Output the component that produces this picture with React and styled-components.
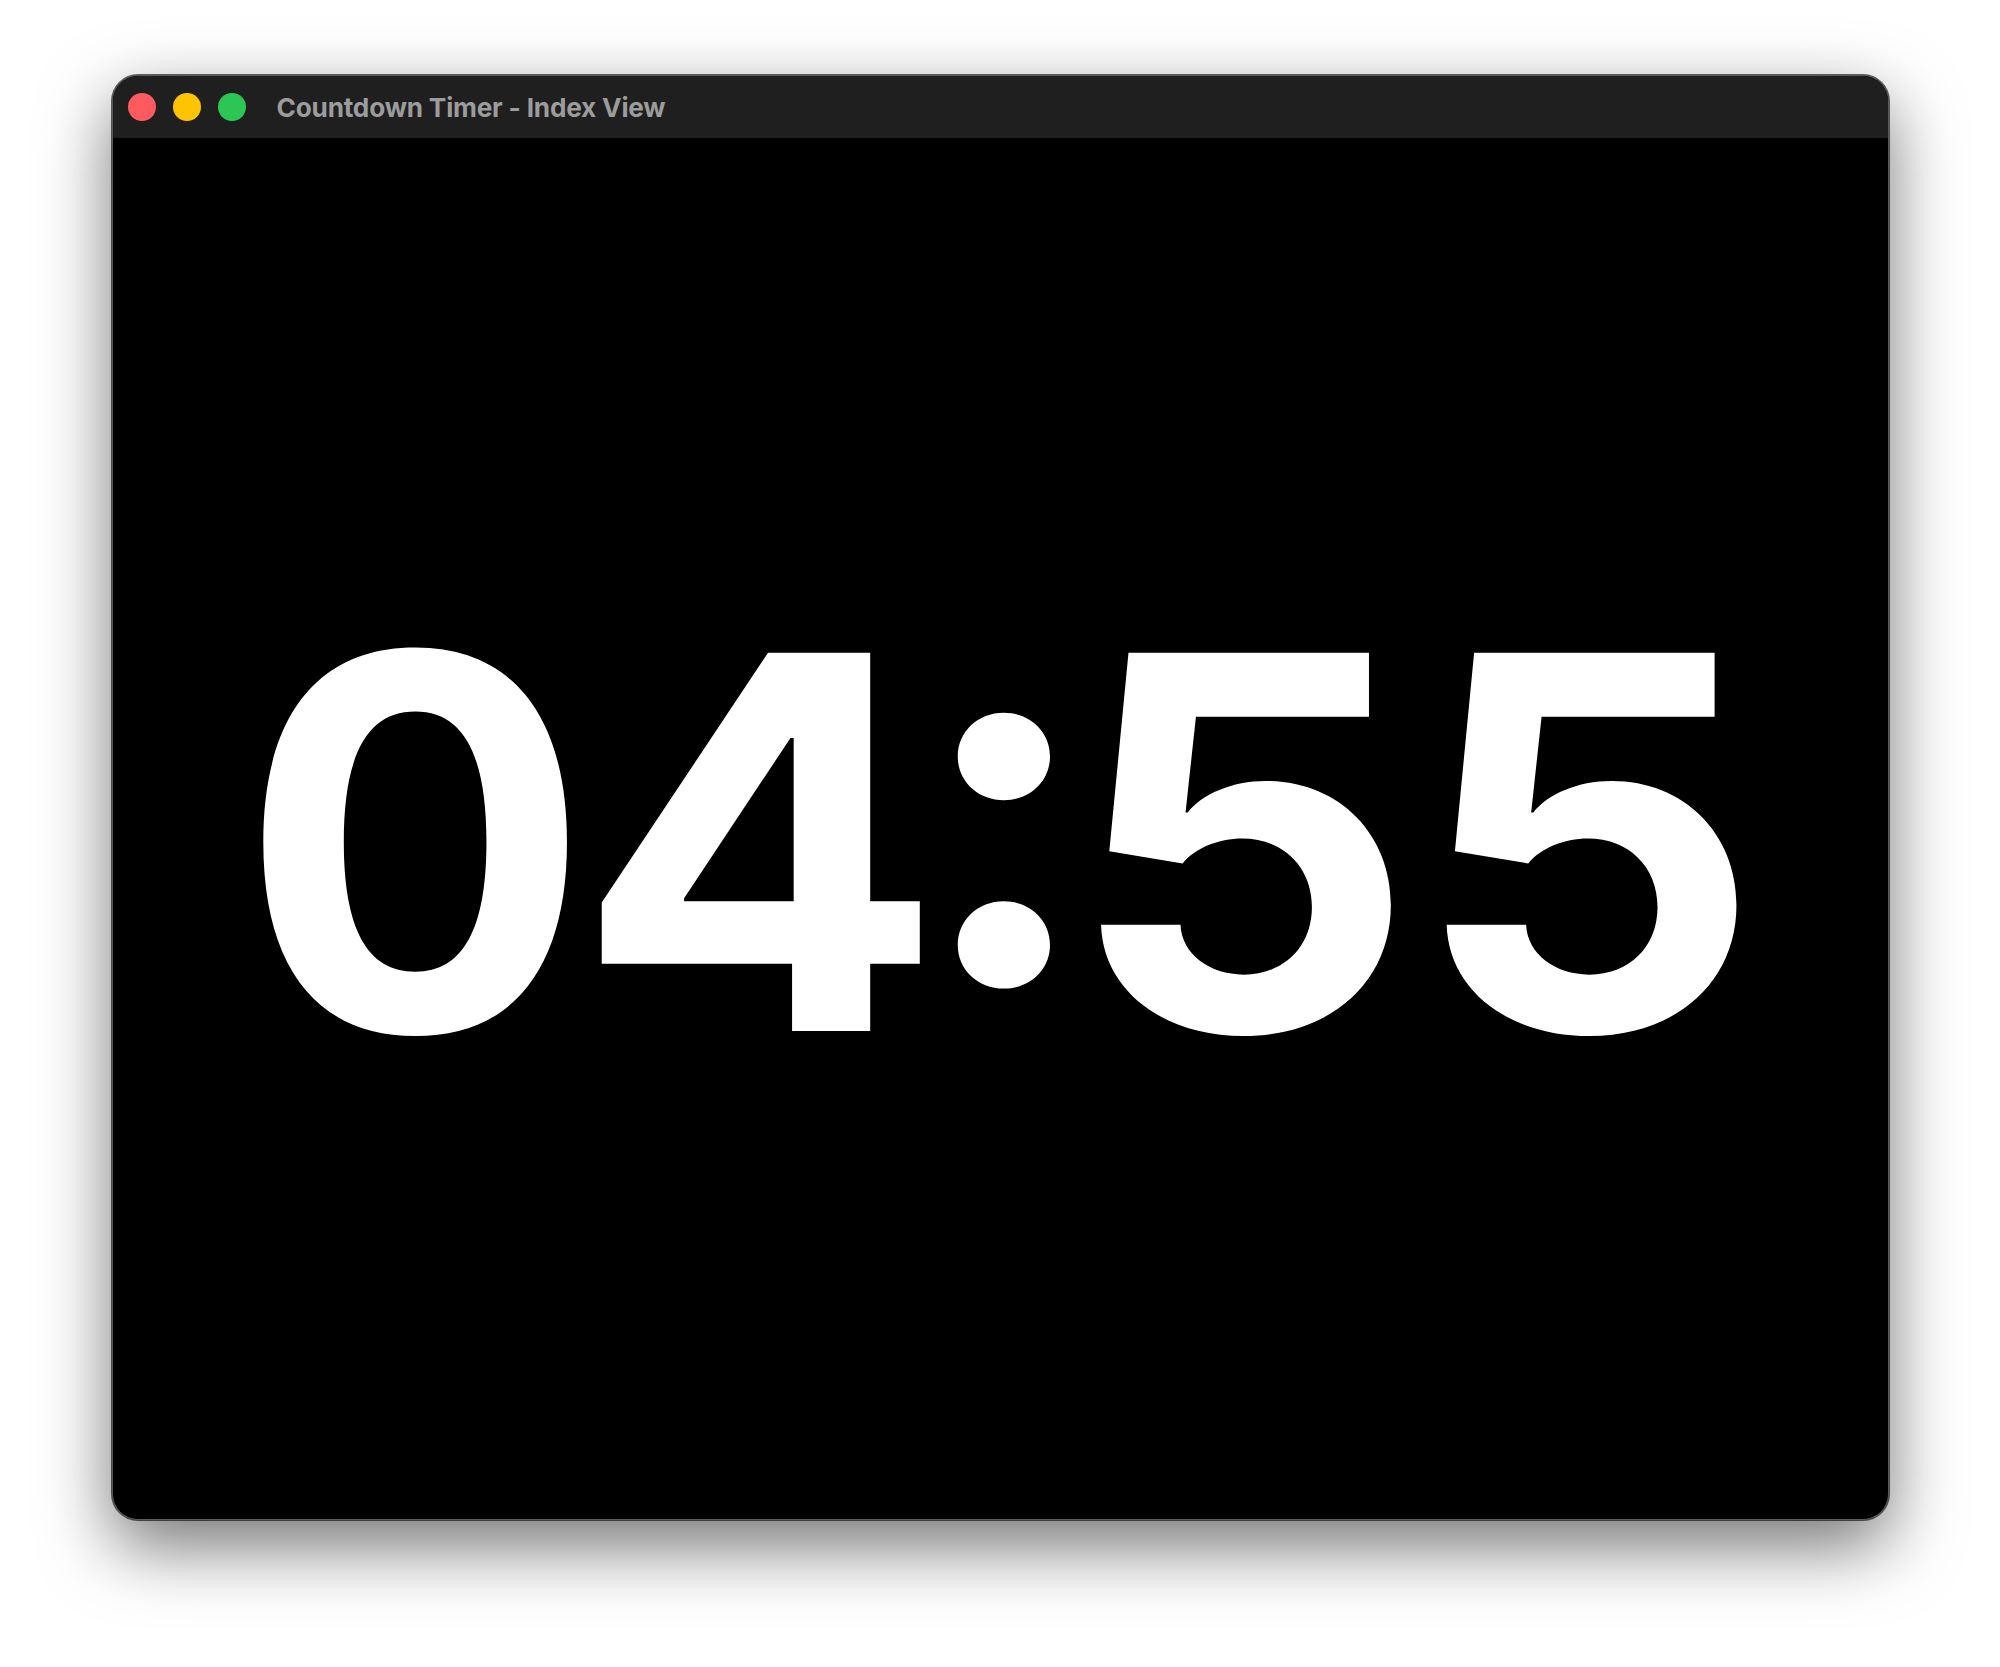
import React from "react";
import styled, { createGlobalStyle } from "styled-components";

const Global = createGlobalStyle`
  html, body { margin: 0; padding: 0; background: #ffffff; }
  body { font-family: Inter, "Noto Sans", sans-serif; }
`;

const Page = styled.div`
  width: 2000px;
  height: 1667px;
  padding-top: 75px;
  box-sizing: border-box;
  display: flex;
  justify-content: center;
  align-items: flex-start;
`;

const Window = styled.div`
  width: 1777px;
  height: 1445px;
  box-sizing: border-box;
  border-radius: 26px;
  border: 1.5px solid #5a5a5a;
  background: #000;
  overflow: hidden;
  display: flex;
  flex-direction: column;
  box-shadow: 0 26px 70px rgba(0, 0, 0, 0.55), 0 0 0 1px rgba(0, 0, 0, 0.6);
`;

const TitleBar = styled.div`
  height: 62px;
  flex: none;
  background: #1f1f1f;
  display: flex;
  align-items: center;
  padding-left: 15px;
  gap: 17px;
`;

const Light = styled.span`
  width: 28px;
  height: 28px;
  border-radius: 50%;
  background: ${(p) => p.$color};
  flex: none;
`;

const Lights = styled.div`
  display: flex;
  gap: 17px;
`;

const Title = styled.div`
  margin-left: 14px;
  font-family: Inter, "Noto Sans", sans-serif;
  font-weight: 700;
  font-size: 26.2px;
  color: #9c9c9c;
  letter-spacing: -0.2px;
`;

const Content = styled.div`
  flex: 1;
  display: flex;
  align-items: center;
  justify-content: center;
`;

const Clock = styled.div`
  font-family: Inter, "Noto Sans", sans-serif;
  font-weight: 700;
  font-size: 520px;
  line-height: 1;
  color: #ffffff;
  font-variant-numeric: tabular-nums;
  font-feature-settings: "tnum" 1, "calt" 1;
  letter-spacing: -7px;
  margin-top: 26px;
  transform: scaleX(1.05);
`;

export default function App() {
  return (
    <>
      <Global />
      <Page>
        <Window>
          <TitleBar>
            <Lights>
              <Light $color="#ff5a5f" />
              <Light $color="#fec402" />
              <Light $color="#2bc653" />
            </Lights>
            <Title>Countdown Timer - Index View</Title>
          </TitleBar>
          <Content>
            <Clock>04:55</Clock>
          </Content>
        </Window>
      </Page>
    </>
  );
}
